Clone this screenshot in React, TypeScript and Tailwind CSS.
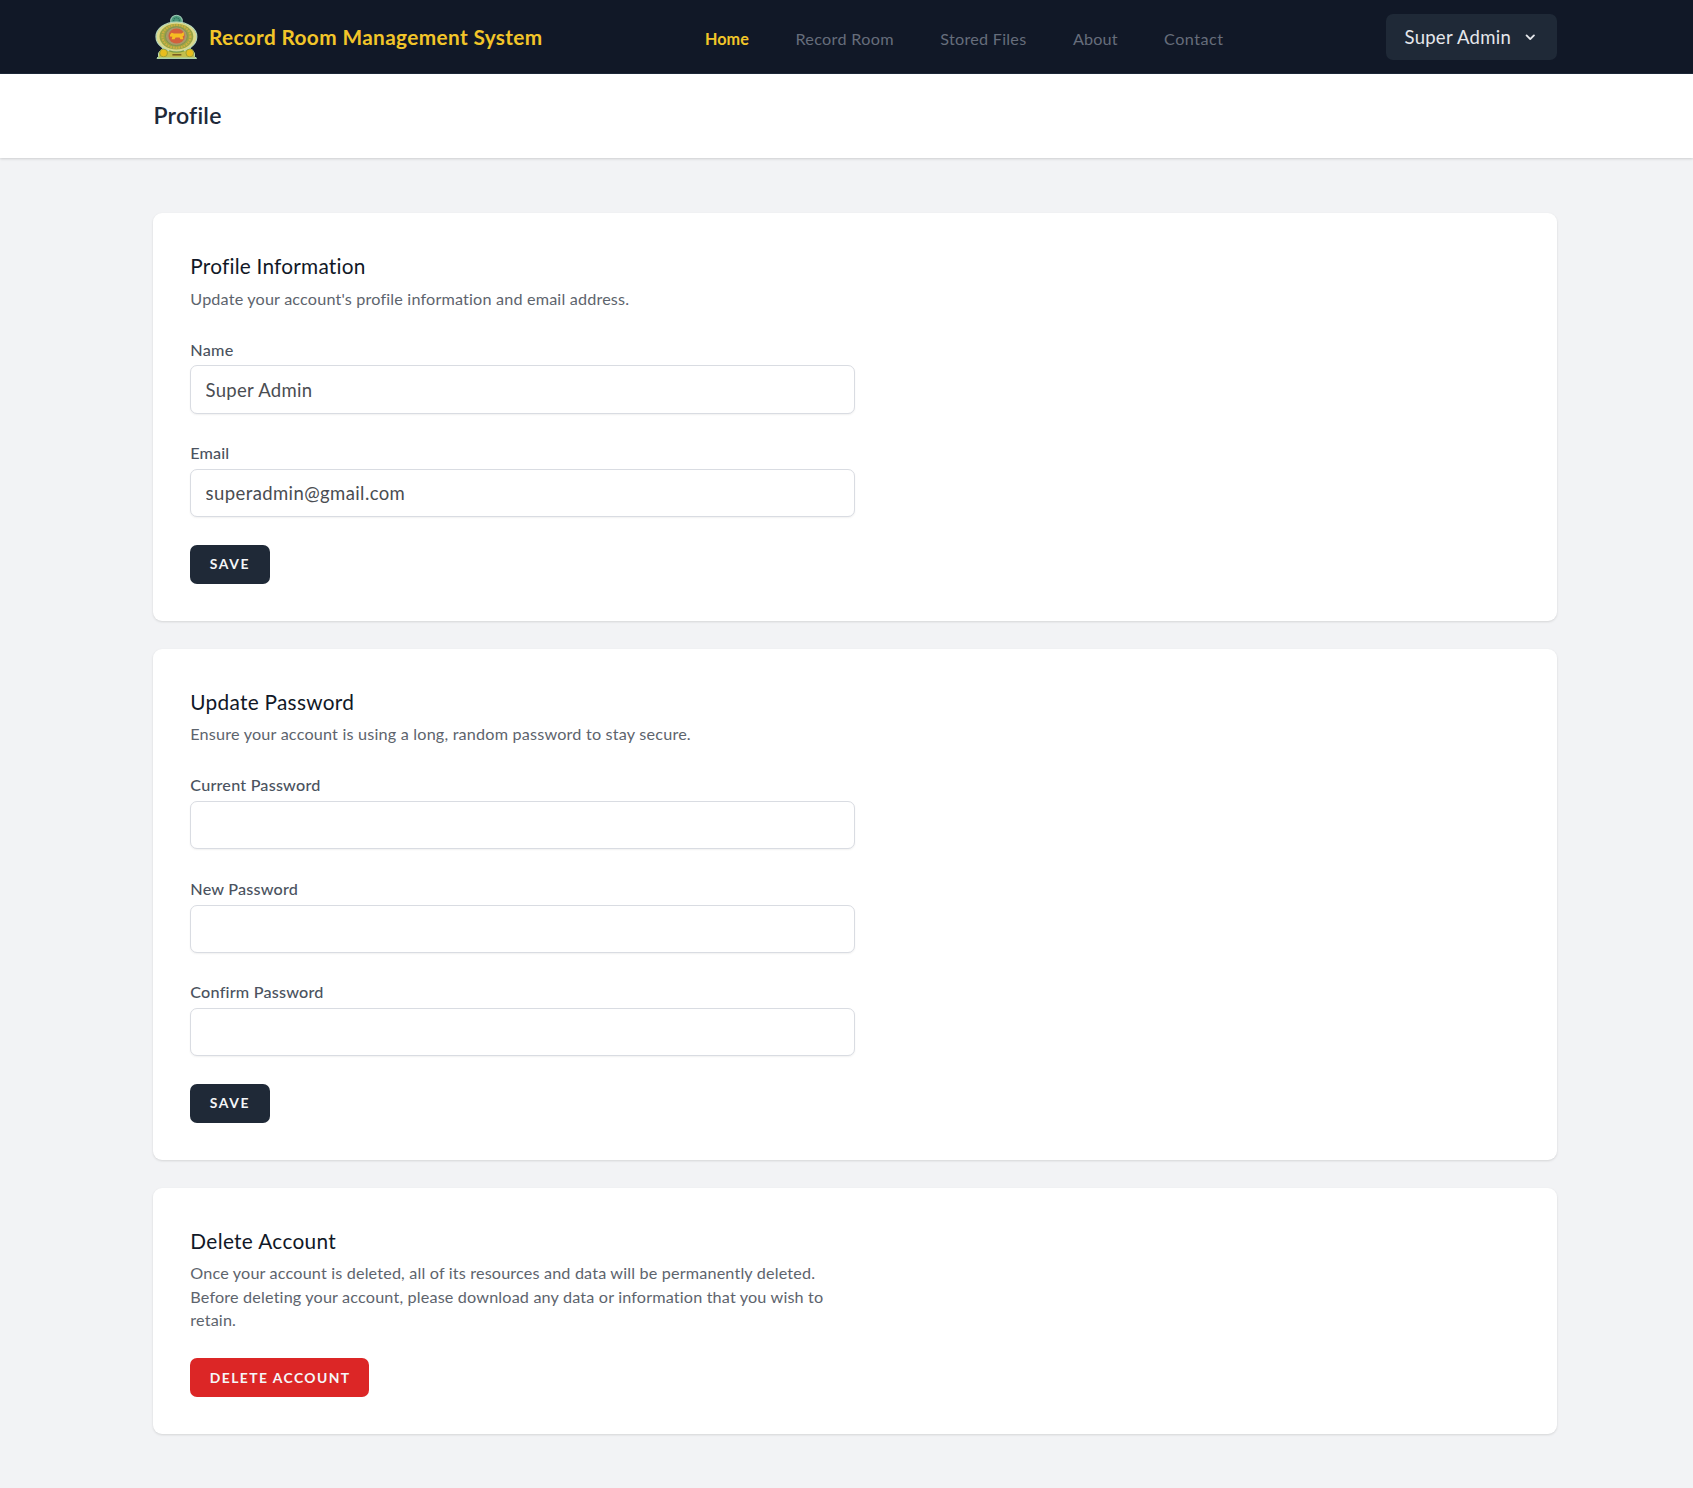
import React from 'react';

function Emblem() {
  return (
    <svg viewBox="0 0 46 50" className="h-[50px] w-[46px] shrink-0" aria-hidden="true">
      <circle cx="22.5" cy="9" r="5.8" fill="#4f9a7c" stroke="#9cc9b4" strokeWidth="1.1" />
      <circle cx="22.5" cy="8.6" r="2.8" fill="none" stroke="#2c6f5c" strokeWidth="1.1" strokeDasharray="1.2 .8" />
      <path
        d="M3 46.4 L4.6 44.4 Q3.4 41 6.6 38.4 L10 35.6 H35 L38.6 38.4 Q41.4 41 40.4 44.4 L42.4 46.4 Z"
        fill="#c3bf4c"
        stroke="#bfe0b4"
        strokeWidth="1"
      />
      <ellipse cx="22.4" cy="24.8" rx="20.4" ry="14.8" fill="#dcd98a" stroke="#b5d6bb" strokeWidth="1.2" />
      <ellipse cx="22.4" cy="24.6" rx="16.9" ry="12.8" fill="#9aa544" />
      <ellipse cx="22.4" cy="24.4" rx="14" ry="11.4" fill="none" stroke="#cfae42" strokeWidth="2.2" strokeDasharray="1.8 .9" />
      <ellipse cx="22.4" cy="24.2" rx="11" ry="9.4" fill="#a99a6a" stroke="#84924e" strokeWidth="1" />
      <ellipse cx="22.6" cy="24" rx="8.2" ry="7.4" fill="#d2603c" />
      <path
        d="M16 22.8 L17.6 20.8 L20 21.4 H27.6 L29.8 20 L30 23.4 L28.6 24.6 L29.4 27.2 H26.4 L25.6 25.4 H21.6 L20.6 27.2 H17.6 L18.4 24.8 L16 24.6 Z"
        fill="#f6bd22"
      />
      <circle cx="9.6" cy="41" r="3.9" fill="#e8bd1e" stroke="#8d9a3b" strokeWidth=".8" />
      <circle cx="35.8" cy="41" r="3.9" fill="#e8bd1e" stroke="#8d9a3b" strokeWidth=".8" />
      <path d="M15.2 38.8 Q22.6 41.4 30 38.8" fill="none" stroke="#7f9a3c" strokeWidth="1.4" />
      <path d="M18.4 42.8 H27.4" stroke="#7a5a1e" strokeWidth="1.5" />
      <path d="M3 46.2 H42.6" stroke="#a9cfa6" strokeWidth="1.2" />
    </svg>
  );
}

function Card({ children }: { children: React.ReactNode }) {
  return (
    <section className="rounded-[9px] bg-white py-[37px] pl-[37.3px] shadow-[0_1px_3px_rgba(0,0,0,0.08),0_1px_2px_rgba(0,0,0,0.05)]">
      <div className="w-[665px]">{children}</div>
    </section>
  );
}

function Title({ children, className }: { children: string; className: string }) {
  return <h2 className={`text-[20.8px] leading-[32px] text-[#111827] ${className}`}>{children}</h2>;
}

function Field({ label, type = 'text', value = '', labelClass = 'tracking-[0.2px]', inputClass = '' }: {
  label: string;
  type?: string;
  value?: string;
  labelClass?: string;
  inputClass?: string;
}) {
  return (
    <label className="block">
      <span className={`block text-[16.2px] leading-[23px] font-medium text-[#4b5360] ${labelClass}`}>{label}</span>
      <input
        type={type}
        defaultValue={value}
        className={`mt-[4.6px] block h-[48.3px] w-full rounded-[7px] border border-[#d9dce2] bg-white px-[14.3px] text-[18.5px] text-[#4a4d52] shadow-[0_1px_2px_rgba(0,0,0,0.06)] outline-none ${inputClass}`}
      />
    </label>
  );
}

function Button({ children, className }: { children: string; className: string }) {
  return (
    <button className={`block h-[39px] rounded-[7px] pl-[19.5px] text-left text-[13.9px] font-bold text-[#f5f6f8] uppercase ${className}`}>
      {children}
    </button>
  );
}

export default function App() {
  return (
    <div className="h-[1488px] overflow-hidden bg-[#f2f3f5] font-[Lato,sans-serif]">
      <nav className="h-[74px] border-b border-gray-800 bg-[#111827]">
        <div className="ml-[153px] flex h-full w-[1404px] items-center">
          <div className="flex w-[552px] items-center gap-[9px] pl-[1px]">
            <Emblem />
            <span className="text-[20.8px] font-bold tracking-[0.37px] whitespace-nowrap text-[#f2c529]">
              Record Room Management System
            </span>
          </div>
          <div className="flex items-center gap-[46.5px] pt-[5px] text-[16.2px] whitespace-nowrap text-[#666d7b]">
            <a className="font-bold tracking-[0.05px] text-[#f2c529]">Home</a>
            <a className="tracking-[0.31px]">Record Room</a>
            <a className="tracking-[0.25px]">Stored Files</a>
            <a className="tracking-[0.14px]">About</a>
            <a className="tracking-[0.45px]">Contact</a>
          </div>
          <button className="ml-auto flex h-[46px] w-[171.5px] items-center rounded-[7px] bg-[#1f2937] pt-[2px] pl-[19px] text-[18.5px] tracking-[0.28px] text-[#e5e7eb]">
            Super Admin
            <svg viewBox="0 0 20 20" className="ml-[9.5px] size-[18.5px]" fill="currentColor">
              <path
                fillRule="evenodd"
                clipRule="evenodd"
                d="M5.293 7.293a1 1 0 011.414 0L10 10.586l3.293-3.293a1 1 0 111.414 1.414l-4 4a1 1 0 01-1.414 0l-4-4a1 1 0 010-1.414z"
              />
            </svg>
          </button>
        </div>
      </nav>

      <header className="relative h-[84px] bg-white shadow-[0_1px_3px_rgba(0,0,0,0.1),0_1px_2px_rgba(0,0,0,0.06)]">
        <div className="ml-[153.5px] flex h-full items-center pb-[2px]">
          <h1 className="text-[23.1px] leading-[29px] font-semibold tracking-[0.2px] text-gray-800">Profile</h1>
        </div>
      </header>

      <main className="ml-[153px] flex w-[1404px] flex-col gap-[28px] pt-[55.3px]">
        <Card>
          <Title className="tracking-[0.22px]">Profile Information</Title>
          <p className="mt-[4.6px] text-[16.2px] leading-[23.1px] tracking-[0.17px] text-[#5d646d]">
            Update your account's profile information and email address.
          </p>
          <form className="mt-[27.9px] flex flex-col gap-[27.6px]">
            <Field label="Name" value="Super Admin" labelClass="tracking-[0.25px]" inputClass="tracking-[0.3px]" />
            <Field label="Email" type="email" value="superadmin@gmail.com" labelClass="tracking-[0.1px]" inputClass="tracking-[0.4px]" />
            <Button className="w-[79.5px] bg-[#1f2937] tracking-[1.6px]">Save</Button>
          </form>
        </Card>

        <Card>
          <Title className="tracking-[0.29px]">Update Password</Title>
          <p className="mt-[4.6px] text-[16.2px] leading-[23.1px] tracking-[0.19px] text-[#5d646d]">
            Ensure your account is using a long, random password to stay secure.
          </p>
          <form className="mt-[27.9px] flex flex-col gap-[27.6px]">
            <Field label="Current Password" type="password" />
            <Field label="New Password" type="password" />
            <Field label="Confirm Password" type="password" />
            <Button className="w-[79.5px] bg-[#1f2937] tracking-[1.6px]">Save</Button>
          </form>
        </Card>

        <Card>
          <Title className="tracking-[0.34px]">Delete Account</Title>
          <p className="mt-[4.6px] text-[16.2px] leading-[23.1px] tracking-[0.16px] text-[#5d646d]">
            Once your account is deleted, all of its resources and data will be permanently deleted. Before deleting your
            account, please download any data or information that you wish to retain.
          </p>
          <div className="mt-[27.7px]">
            <Button className="w-[179px] bg-[#dc2626] tracking-[1.42px]">Delete Account</Button>
          </div>
        </Card>
      </main>
    </div>
  );
}
